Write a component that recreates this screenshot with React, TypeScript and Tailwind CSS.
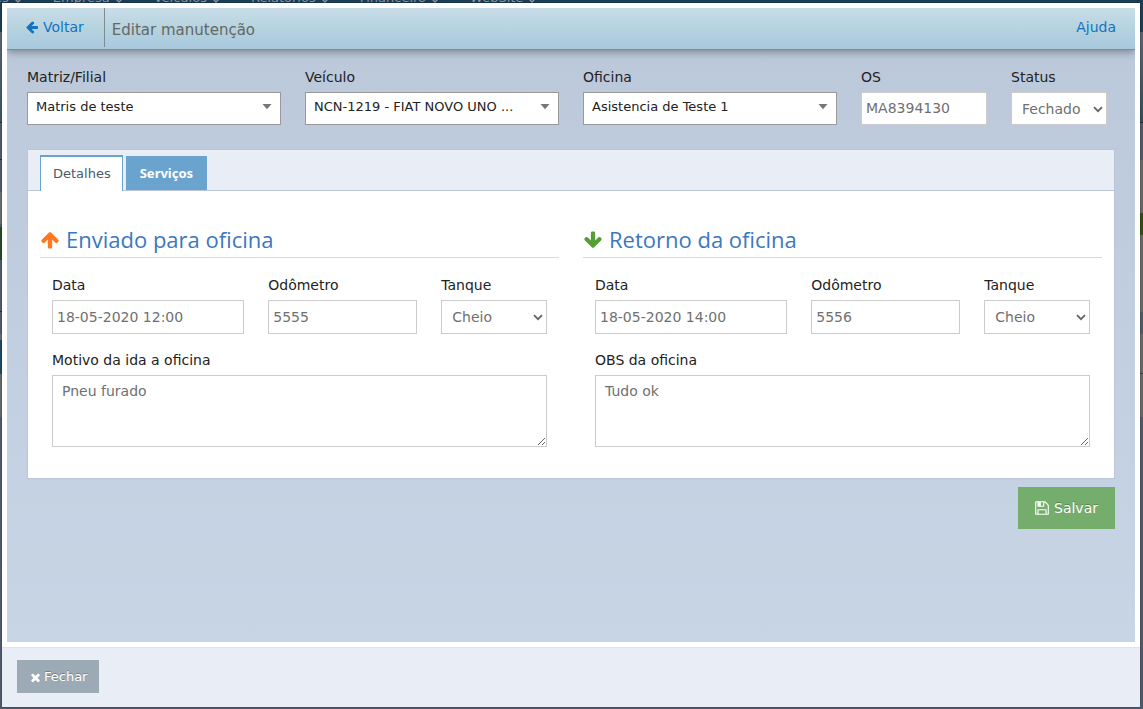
import { useState, type ReactNode } from "react";
import clsx from "clsx";

const ICONS = {
  up: "M1675 971q0 51-37 90l-75 75q-38 38-91 38-54 0-90-38l-294-293v704q0 52-37.5 84.5t-90.5 32.5h-128q-53 0-90.5-32.5t-37.5-84.5v-704l-294 293q-36 38-90 38t-90-38l-75-75q-38-38-38-90 0-53 38-91l651-651q35-37 90-37 54 0 91 37l651 651q37 39 37 91z",
  left: "M1664 896v128q0 53-32.5 90.5t-84.5 37.5h-704l293 294q38 36 38 90t-38 90l-75 76q-37 37-90 37-52 0-91-37l-651-652q-37-37-37-90 0-52 37-91l651-650q38-38 91-38 52 0 90 38l75 74q38 38 38 91t-38 91l-293 293h704q52 0 84.5 37.5t32.5 90.5z",
  save: "M512 1536h768v-384h-768v384zm896 0h128v-896q0-14-10-38.5t-20-34.5l-281-281q-10-10-34-20t-39-10v416q0 40-28 68t-68 28h-576q-40 0-68-28t-28-68v-416h-128v1280h128v-416q0-40 28-68t68-28h832q40 0 68 28t28 68v416zm-384-928v-320q0-13-9.5-22.5t-22.5-9.5h-192q-13 0-22.5 9.5t-9.5 22.5v320q0 13 9.5 22.5t22.5 9.5h192q13 0 22.5-9.5t9.5-22.5zm640 32v928q0 40-28 68t-68 28h-1344q-40 0-68-28t-28-68v-1344q0-40 28-68t68-28h928q40 0 88 20t76 48l280 280q28 28 48 76t20 88z",
  close: "M1490 1322q0 40-28 68l-136 136q-28 28-68 28t-68-28l-294-294-294 294q-28 28-68 28t-68-28l-136-136q-28-28-28-68t28-68l294-294-294-294q-28-28-28-68t28-68l136-136q28-28 68-28t68 28l294 294 294-294q28-28 68-28t68 28l136 136q28 28 28 68t-28 68l-294 294 294 294q28 28 28 68z",
};

function Icon({ name, className }: { name: keyof typeof ICONS; className?: string }) {
  return (
    <svg viewBox="0 0 1792 1792" fill="currentColor" aria-hidden="true" className={clsx("shrink-0", className)}>
      <path d={ICONS[name]} />
    </svg>
  );
}

function Field({ id, label, className, children }: { id: string; label: string; className?: string; children: ReactNode }) {
  return (
    <div className={clsx("px-3", className)}>
      <label htmlFor={id} className="mb-[5px] block leading-5 text-[#222]">
        {label}
      </label>
      {children}
    </div>
  );
}

function PickerField({ id, label, value }: { id: string; label: string; value: string }) {
  return (
    <Field id={id} label={label} className="w-1/4">
      <div className="relative">
        <select
          id={id}
          defaultValue={value}
          className="block h-[33px] w-full appearance-none truncate border border-[#999] bg-white pr-8 pb-[2px] pl-2 text-[13px] text-[#222] outline-none"
        >
          <option>{value}</option>
        </select>
        <svg viewBox="0 0 10 6" className="pointer-events-none absolute top-3 right-[9px] h-[6px] w-[10px] fill-[#777]" aria-hidden="true">
          <path d="M0.5 0h9L5 5.2z" />
        </svg>
      </div>
    </Field>
  );
}

function SelectField({ id, label, value, className, tall }: { id: string; label: string; value: string; className?: string; tall?: boolean }) {
  return (
    <Field id={id} label={label} className={className}>
      <div className="relative">
        <select
          id={id}
          defaultValue={value}
          className={clsx(
            "block w-full appearance-none border border-[#ccc] bg-white pl-[10px] text-sm text-[#707070] outline-none",
            tall ? "h-[34px]" : "h-[33px]"
          )}
        >
          <option>{value}</option>
        </select>
        <svg viewBox="0 0 10 7" className="pointer-events-none absolute top-[14px] right-1 h-[7px] w-[10px]" aria-hidden="true">
          <path d="M1 1.2l4 4 4-4" fill="none" stroke="#666" strokeWidth="1.9" />
        </svg>
      </div>
    </Field>
  );
}

function InputField({ id, label, value, className, tall }: { id: string; label: string; value: string; className?: string; tall?: boolean }) {
  return (
    <Field id={id} label={label} className={className}>
      <input
        id={id}
        defaultValue={value}
        className={clsx(
          "block w-full border border-[#ccc] bg-white px-1 text-sm text-[#707070] outline-none",
          tall ? "h-[34px]" : "h-[33px] pb-[2px]"
        )}
      />
    </Field>
  );
}

type StageProps = {
  id: string;
  title: string;
  icon: ReactNode;
  date: string;
  odometer: string;
  noteLabel: string;
  note: string;
};

function Stage({ id, title, icon, date, odometer, noteLabel, note }: StageProps) {
  return (
    <section>
      <h3 className="mb-[17px] flex items-center gap-[6px] border-b border-[#cfdcea] pb-[3px] font-['Open_Sans',sans-serif] text-[22px] leading-[30px] text-[#3b78bf]">
        {icon}
        {title}
      </h3>
      <div className="grid grid-cols-12 gap-y-4">
        <InputField id={`${id}-data`} label="Data" value={date} className="col-span-5" tall />
        <InputField id={`${id}-odometro`} label="Odômetro" value={odometer} className="col-span-4" tall />
        <SelectField id={`${id}-tanque`} label="Tanque" value="Cheio" className="col-span-3" tall />
        <Field id={`${id}-nota`} label={noteLabel} className="col-span-12">
          <textarea
            id={`${id}-nota`}
            defaultValue={note}
            className="block h-[72px] w-full resize border border-[#ccc] bg-white px-[9px] py-[5px] text-sm leading-5 text-[#707070] outline-none"
          />
        </Field>
      </div>
    </section>
  );
}

const MENU = ["es", "Empresa", "Veículos", "Relatórios", "Financeiro", "WebSite"];

// Dimmed page that stays visible around the modal
function Backdrop() {
  return (
    <div className="absolute inset-0 overflow-hidden" aria-hidden="true">
      <div className="h-8 overflow-hidden bg-[#1b3c55]">
        <div className="-mt-3 -ml-[6px] flex gap-[30px] text-[13px] leading-5 text-[#8a949b]">
          {MENU.map((item) => (
            <span key={item} className="flex items-center gap-1">
              {item}
              <svg viewBox="0 0 10 6" className="mt-1 h-[6px] w-[10px]">
                <path d="M1 1l4 4 4-4" fill="none" stroke="currentColor" strokeWidth="1.4" />
              </svg>
            </span>
          ))}
        </div>
      </div>
      <div className="flex h-full justify-between bg-[#50596a]">
        <div className="w-1">
          <div className="h-[90px] bg-linear-to-b from-[#596370] to-[#3a5562]" />
          <div className="h-[38px] border-y border-[#262c36]" />
          <div className="h-8" />
          <div className="h-8 bg-[#6a6a6a]" />
          <div className="mt-[3px] h-[33px] bg-[#244a22]" />
          <div className="h-[52px] border-b border-[#262c36]" />
          <div className="mt-[22px] h-[6px] bg-[#6a6a6a]" />
          <div className="h-[34px] bg-[#1c4866]" />
          <div className="h-[43px] bg-[#666]" />
        </div>
        <div className="w-1">
          <div className="h-[90px] bg-linear-to-b from-[#596370] to-[#2f4e5c]" />
          <div className="h-[38px] border-t border-[#262c36]" />
          <div className="h-[53px] bg-[#676666]" />
          <div className="h-[22px] bg-[#324e16]" />
          <div className="h-[77px] bg-[#676666]" />
          <div className="h-[22px] bg-[#4d5a66]" />
          <div className="h-10 border-b border-[#3b4249] bg-[#676666]" />
          <div className="h-[43px] bg-[#676666]" />
        </div>
      </div>
    </div>
  );
}

export default function App() {
  const [tab, setTab] = useState("detalhes");

  return (
    <div className="relative flex min-h-screen flex-col pt-[3px] pr-[3px] pb-[2px] pl-[2px] font-['DejaVu_Sans',Verdana,sans-serif] text-sm">
      <Backdrop />
      <div className="relative flex flex-1 flex-col bg-white shadow-[0_0_1px_rgba(0,0,0,0.6)]" role="dialog" aria-label="Editar manutenção">
        <div className="flex flex-1 flex-col p-[5px]">
          <div className="flex flex-1 flex-col overflow-hidden bg-linear-to-b from-[#bac8da] to-[#c8d5e5]">
            <header className="relative flex h-[42px] items-stretch border-b border-[#7f8b90] bg-linear-to-b from-[#c9dde9] via-[#b5d3de] to-[#a8c8de] shadow-[0_2px_8px_rgba(0,0,0,0.35)]">
              <a href="#voltar" className="mb-[2px] flex items-center gap-1 border-r border-[#7f8b90] pr-5 pb-[1px] pl-[18px] text-[#1073c2]">
                <Icon name="left" className="size-[14px]" />
                Voltar
              </a>
              <h1 className="flex items-center pt-1 pl-[7px] text-[15px] text-[#666]">Editar manutenção</h1>
              <a href="#ajuda" className="mb-[2px] ml-auto flex items-center pr-[19px] pb-[1px] text-[#1073c2]">
                Ajuda
              </a>
            </header>

            <form className="px-5 pt-[17px]" onSubmit={(e) => e.preventDefault()}>
              <div className="-mx-3 flex">
                <PickerField id="matriz" label="Matriz/Filial" value="Matris de teste" />
                <PickerField id="veiculo" label="Veículo" value="NCN-1219 - FIAT NOVO UNO ..." />
                <PickerField id="oficina" label="Oficina" value="Asistencia de Teste 1" />
                <InputField id="os" label="OS" value="MA8394130" className="w-[150px] shrink-0" />
                <SelectField id="status" label="Status" value="Fechado" className="w-[120px] shrink-0" />
                <div className="w-2 shrink-0" />
              </div>

              <div className="mt-6 border border-[#b8c6d8] bg-white">
                <div role="tablist" className="flex h-[41px] items-end gap-[3px] border-b border-[#b8c6d8] bg-[#e9eef6] pl-3 text-[13px]">
                  <button
                    type="button"
                    role="tab"
                    aria-selected={tab === "detalhes"}
                    onClick={() => setTab("detalhes")}
                    className="-mb-[1px] h-9 border-x border-t-2 border-[#6ba3cf] bg-white pr-[11px] pl-3 text-[#495b67]"
                  >
                    Detalhes
                  </button>
                  <button
                    type="button"
                    role="tab"
                    aria-selected={tab === "servicos"}
                    onClick={() => setTab("servicos")}
                    className="h-[34px] bg-[#6ba3cf] px-[14px] font-['Noto_Sans',sans-serif] font-bold text-white"
                  >
                    Serviços
                  </button>
                </div>

                <div className="grid grid-cols-2 gap-6 px-3 pt-[33px] pb-[31px]">
                  <Stage
                    id="envio"
                    title="Enviado para oficina"
                    icon={<Icon name="up" className="mt-[2px] size-5 text-[#ff7720]" />}
                    date="18-05-2020 12:00"
                    odometer="5555"
                    noteLabel="Motivo da ida a oficina"
                    note="Pneu furado"
                  />
                  <Stage
                    id="retorno"
                    title="Retorno da oficina"
                    icon={<Icon name="up" className="mt-[2px] size-5 rotate-180 text-[#559d35]" />}
                    date="18-05-2020 14:00"
                    odometer="5556"
                    noteLabel="OBS da oficina"
                    note="Tudo ok"
                  />
                </div>
              </div>

              <div className="mt-2 flex justify-end">
                <button
                  type="submit"
                  className="flex h-[42px] items-center gap-1 bg-[#75ad6d] pr-[17px] pl-4 text-sm text-white text-shadow-[0_-1px_0_rgba(0,0,0,0.25)]"
                >
                  <Icon name="save" className="size-4" />
                  Salvar
                </button>
              </div>
            </form>
          </div>
        </div>

        <footer className="border-t border-[#e1e3e8] bg-[#e9eef6] px-[15px] pt-3 pb-[14px]">
          <button
            type="button"
            className="flex h-[33px] items-center gap-[2px] bg-[#9baab5] px-3 pt-[1px] text-[13px] text-white text-shadow-[0_-1px_0_rgba(0,0,0,0.25)]"
          >
            <Icon name="close" className="size-[13px]" />
            Fechar
          </button>
        </footer>
      </div>
    </div>
  );
}
